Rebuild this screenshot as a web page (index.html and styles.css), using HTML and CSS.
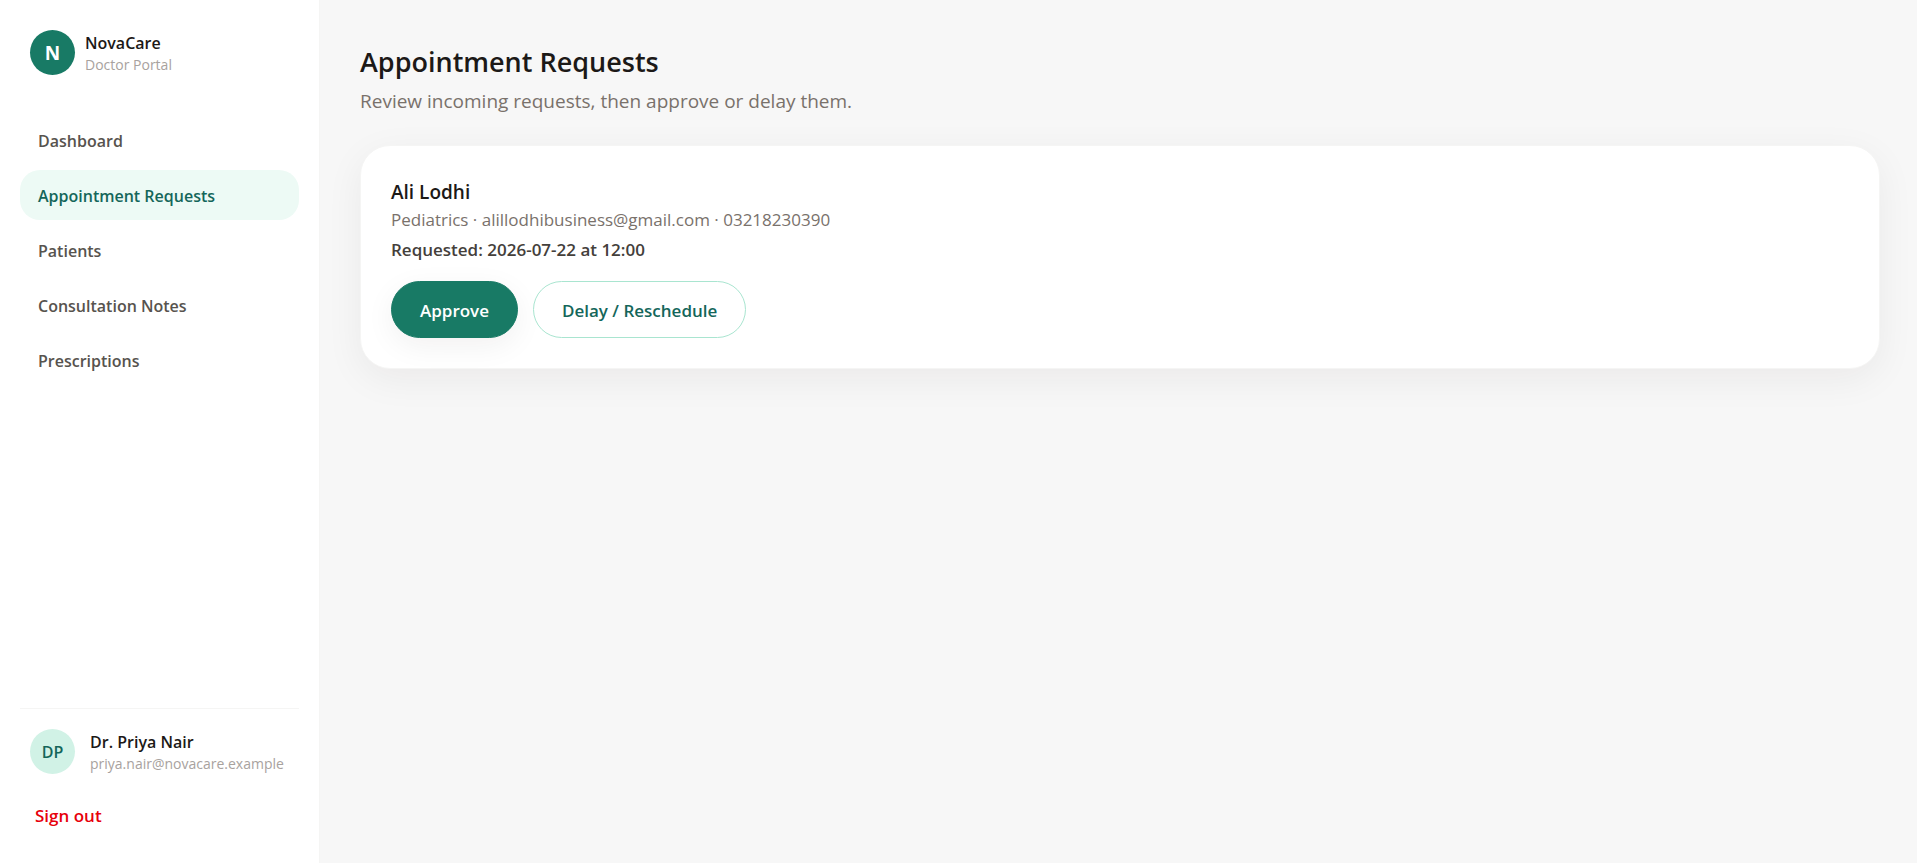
FILE: index.html
```html
<!DOCTYPE html>
<html lang="en">
<head>
<meta charset="UTF-8">
<meta name="viewport" content="width=device-width, initial-scale=1.0">
<title>NovaCare Doctor Portal</title>
<link rel="stylesheet" href="styles.css">
</head>
<body>
<div class="layout">
    <aside class="sidebar">
        <div class="brand">
            <div class="avatar brand-logo">N</div>
            <div>
                <p class="name">NovaCare</p>
                <p class="caption">Doctor Portal</p>
            </div>
        </div>
        <nav class="nav">
            <a href="#" class="nav-link">Dashboard</a>
            <a href="#" class="nav-link active">Appointment Requests</a>
            <a href="#" class="nav-link">Patients</a>
            <a href="#" class="nav-link">Consultation Notes</a>
            <a href="#" class="nav-link">Prescriptions</a>
        </nav>
        <div class="account">
            <div class="user">
                <div class="avatar">DP</div>
                <div>
                    <p class="name">Dr. Priya Nair</p>
                    <p class="caption">priya.nair@novacare.example</p>
                </div>
            </div>
            <button type="button" class="sign-out">Sign out</button>
        </div>
    </aside>
    <main class="content">
        <h1>Appointment Requests</h1>
        <p class="subtitle">Review incoming requests, then approve or delay them.</p>
        <article class="card">
            <h2>Ali Lodhi</h2>
            <p class="details">Pediatrics · alillodhibusiness@gmail.com · 03218230390</p>
            <p class="requested">Requested: 2026-07-22 at 12:00</p>
            <div class="actions">
                <button type="button" class="btn btn-primary">Approve</button>
                <button type="button" class="btn btn-outline">Delay / Reschedule</button>
            </div>
        </article>
    </main>
</div>
</body>
</html>
```
FILE: styles.css
```css
* {
    box-sizing: border-box;
}
body {
    margin: 0;
    background: #f7f7f7;
    color: #1c1917;
    font-family: "Segoe UI", "Open Sans", "Noto Sans", sans-serif;
    font-size: 17px;
    line-height: 25px;
}
h1, h2, p {
    margin: 0;
}
button {
    font: inherit;
    cursor: pointer;
}
.layout {
    display: flex;
    min-height: 100vh;
}

/* Sidebar */
.sidebar {
    display: flex;
    flex-direction: column;
    flex: none;
    width: 320px;
    padding: 30px 20px 25px;
    background: white;
    border-right: 1px solid #f5f5f4;
}
.brand, .user {
    display: flex;
    align-items: center;
    padding: 0 10px;
}
.brand {
    gap: 10px;
    margin-bottom: 40px;
}
.user {
    gap: 15px;
}
.avatar {
    display: flex;
    align-items: center;
    justify-content: center;
    flex: none;
    width: 45px;
    height: 45px;
    padding-top: 2px;
    border-radius: 50%;
    background: #d1f2e6;
    color: #14665a;
    font-size: 16px;
    font-weight: 600;
}
.brand-logo {
    background: #187a65;
    color: white;
    font-size: 19px;
    font-weight: 700;
}
.name {
    padding-top: 3px;
    font-size: 16px;
    font-weight: 600;
    line-height: 21px;
}
.caption {
    color: #a8a29e;
    font-size: 14px;
    line-height: 21px;
}
.nav {
    display: flex;
    flex-direction: column;
    gap: 5px;
    flex: 1;
}
.nav-link {
    padding: 14px 18px 11px;
    border-radius: 20px;
    color: #57534e;
    font-size: 16px;
    font-weight: 600;
    text-decoration: none;
}
.nav-link.active {
    background: #edfaf5;
    color: #14665a;
}
.account {
    padding-top: 20px;
    border-top: 1px solid #f5f5f4;
}
.sign-out {
    margin-top: 19px;
    padding: 10px 15px;
    border: none;
    background: none;
    color: #e7000b;
    font-weight: 600;
}

/* Main column */
.content {
    flex: 1;
    padding: 40px 37px 40px 40px;
}
h1 {
    font-size: 27px;
    font-weight: 600;
    line-height: 43px;
}
.subtitle {
    margin-top: 3px;
    color: #79716b;
    font-size: 19px;
    line-height: 30px;
}
.card {
    margin-top: 29px;
    padding: 30px;
    border: 1px solid #f5f5f4;
    border-radius: 30px;
    background: white;
    box-shadow: 0 10px 38px rgba(28, 25, 23, 0.06);
}
h2 {
    font-size: 19px;
    font-weight: 600;
    line-height: 32px;
}
.details {
    color: #79716b;
    line-height: 24px;
}
.requested {
    margin-top: 5px;
    color: #44403b;
    font-weight: 600;
}
.actions {
    display: flex;
    flex-wrap: wrap;
    gap: 15px;
    margin-top: 19px;
}
.btn {
    padding: 16px 28px 14px;
    border: 1px solid;
    border-radius: 30px;
    font-weight: 600;
}
.btn-primary {
    border-color: #187a65;
    background: #187a65;
    color: white;
    box-shadow: 0 8px 30px rgba(28, 25, 23, 0.06);
}
.btn-outline {
    border-color: #a9e5d0;
    background: white;
    color: #14665a;
}
```
